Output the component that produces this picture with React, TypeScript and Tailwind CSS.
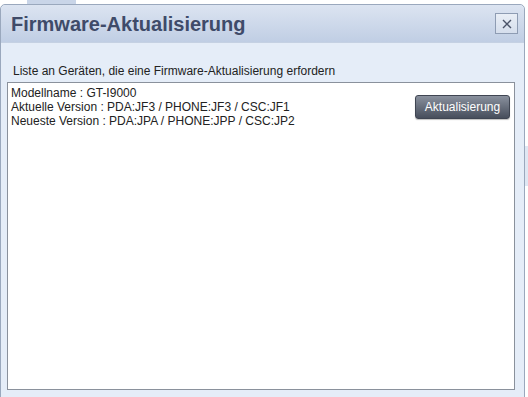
import React from 'react';

const devices = [
  {
    model: 'GT-I9000',
    current: 'PDA:JF3 / PHONE:JF3 / CSC:JF1',
    latest: 'PDA:JPA / PHONE:JPP / CSC:JP2',
  },
];

const UpdateButton: React.FC = () => (
  <button className="h-[24px] w-[95px] rounded-[3px] border border-[#3f4552] bg-gradient-to-b from-[#8a919e] to-[#474e5c] text-[12px] text-white shadow-[0_1px_1px_rgba(0,0,0,0.25)]">
    Aktualisierung
  </button>
);

export default function App() {
  return (
    <div className="relative h-[397px] w-[528px] overflow-hidden bg-white font-['Liberation_Sans',Arial,sans-serif]">
      {/* bits of the page behind the dialog */}
      <div className="absolute left-[27px] top-0 h-[5px] w-[49px] bg-[#c9d5e8]" />
      <div className="absolute left-[525px] top-[146px] h-[40px] w-[3px] bg-[#dfe7f3]" />

      <div className="absolute left-0 top-[4px] flex h-[400px] w-[525px] flex-col rounded-t-[5px] border border-[#9aa8bd] bg-[#e5edf8]">
        <div className="flex h-[38px] items-center justify-between rounded-t-[5px] border-b border-[#c5d1e3] bg-gradient-to-b from-[#dce4f1] to-[#c0cee4] pl-[10px] pr-[6px]">
          <h1 className="text-[20px] font-bold text-[#3f4b69]">Firmware-Aktualisierung</h1>
          <button className="flex h-[21px] w-[23px] items-center justify-center border border-[#8e9cb3] bg-gradient-to-b from-[#e9eef6] to-[#d5deec]">
            <svg width="10" height="10" viewBox="0 0 10 10">
              <path d="M1 1 L9 9 M9 1 L1 9" stroke="#4a5368" strokeWidth="1.4" />
            </svg>
          </button>
        </div>

        <div className="flex flex-1 flex-col px-[6px]">
          <p className="mt-[21px] pl-[6px] text-[12px] leading-[14px] text-[#222]">
            Liste an Geräten, die eine Firmware-Aktualisierung erfordern
          </p>
          <div className="mt-[4px] h-[308px] w-[508px] border border-[#8a919c] bg-white px-[3px] pt-[3px]">
            {devices.map((d) => (
              <div key={d.model} className="flex items-start justify-between">
                <div className="text-[12px] leading-[14px] text-[#222]">
                  <div>Modellname : {d.model}</div>
                  <div>Aktuelle Version : {d.current}</div>
                  <div>Neueste Version : {d.latest}</div>
                </div>
                <div className="mr-[1px] mt-[8px]">
                  <UpdateButton />
                </div>
              </div>
            ))}
          </div>
        </div>
      </div>
    </div>
  );
}
